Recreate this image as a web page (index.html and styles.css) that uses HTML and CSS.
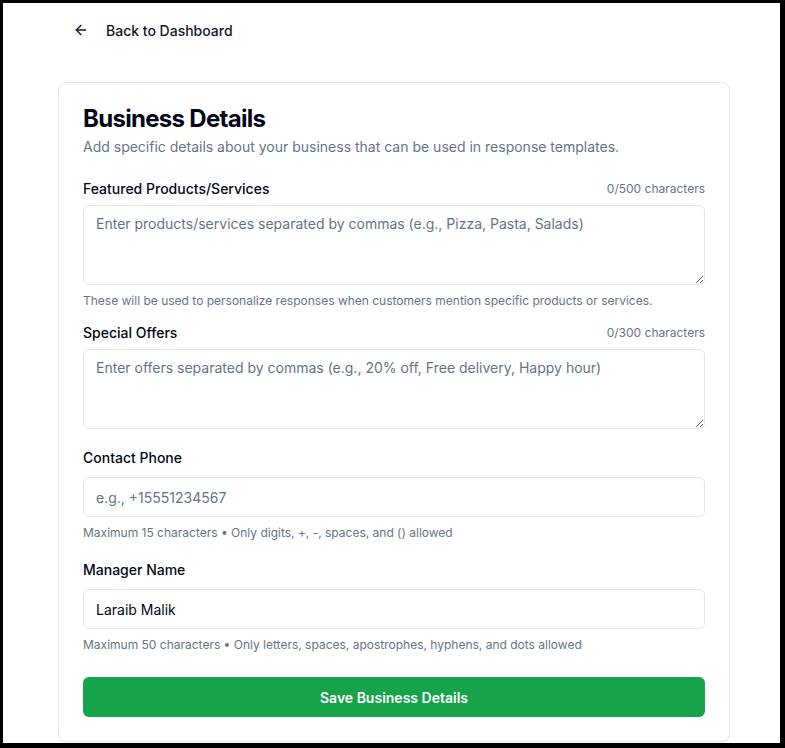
FILE: index.html
```html
<!DOCTYPE html>
<html lang="en">
<head>
<meta charset="utf-8">
<title>Business Details</title>
<link rel="stylesheet" href="styles.css">
</head>
<body>
<div class="frame">
  <div class="page">
    <a class="back" href="#">
      <svg class="back-icon" width="16" height="16" viewBox="0 0 24 24" fill="none" stroke="currentColor" stroke-width="2" stroke-linecap="round" stroke-linejoin="round"><path d="m12 19-7-7 7-7"/><path d="M19 12H5"/></svg>
      <span>Back to Dashboard</span>
    </a>
    <div class="card">
      <h1 class="title">Business Details</h1>
      <p class="subtitle">Add specific details about your business that can be used in response templates.</p>

      <div class="field field-first">
        <div class="field-head">
          <label class="label">Featured Products/Services</label>
          <span class="counter">0/500 characters</span>
        </div>
        <textarea class="textarea" placeholder="Enter products/services separated by commas (e.g., Pizza, Pasta, Salads)"></textarea>
        <p class="help help-area">These will be used to personalize responses when customers mention specific products or services.</p>
      </div>

      <div class="field field-second">
        <div class="field-head">
          <label class="label">Special Offers</label>
          <span class="counter">0/300 characters</span>
        </div>
        <textarea class="textarea" placeholder="Enter offers separated by commas (e.g., 20% off, Free delivery, Happy hour)"></textarea>
      </div>

      <div class="field field-input">
        <label class="label label-input">Contact Phone</label>
        <input class="input" type="text" placeholder="e.g., +15551234567">
        <p class="help">Maximum 15 characters • Only digits, +, -, spaces, and () allowed</p>
      </div>

      <div class="field field-input">
        <label class="label label-input">Manager Name</label>
        <input class="input" type="text" value="Laraib Malik">
        <p class="help">Maximum 50 characters • Only letters, spaces, apostrophes, hyphens, and dots allowed</p>
      </div>

      <button class="save" type="button">Save Business Details</button>
    </div>
  </div>
</div>
</body>
</html>
```

FILE: styles.css
```css
* { box-sizing: border-box; }

html {
  background: #000;
}

body {
  margin: 0;
  font-family: Inter, "Noto Sans", "Liberation Sans", sans-serif;
  color: #0f172a;
}

.frame {
  margin: 3px 5px 5px 3px;
  height: 740px;
  background: #fff;
  overflow: hidden;
}

.page {
  padding-left: 55px;
  padding-top: 9px;
}

.back {
  display: inline-flex;
  align-items: center;
  gap: 17px;
  height: 36px;
  padding-left: 15px;
  color: #0f172a;
  text-decoration: none;
  font-size: 14px;
  font-weight: 500;
}

.back-icon {
  display: block;
  flex: none;
}

.card {
  margin-top: 34px;
  width: 672px;
  border: 1px solid #e5e7eb;
  border-radius: 8px;
  padding: 24px 24px 24px;
  background: #fff;
  box-shadow: 0 1px 2px rgba(0, 0, 0, 0.03);
}

.title {
  margin: 0;
  font-size: 24px;
  line-height: 24px;
  font-weight: 700;
  letter-spacing: -0.7px;
  color: #020817;
}

.subtitle {
  margin: 6px 0 0;
  font-size: 14px;
  line-height: 20px;
  color: #64748b;
}

.field {
  display: flex;
  flex-direction: column;
}

.field-first { margin-top: 22px; }
.field-second { margin-top: 14px; }
.field-input { margin-top: 19px; }

.field-head {
  display: flex;
  justify-content: space-between;
  align-items: center;
  height: 20px;
  margin-bottom: 6px;
}

.label {
  font-size: 14px;
  line-height: 20px;
  font-weight: 500;
  color: #020817;
}

.label-input {
  margin-bottom: 9px;
}

.counter {
  font-size: 12px;
  line-height: 16px;
  color: #64748b;
}

.textarea {
  display: block;
  width: 100%;
  height: 80px;
  padding: 8px 12px;
  border: 1px solid #e2e8f0;
  border-radius: 6px;
  font-family: inherit;
  font-size: 14px;
  line-height: 20px;
  color: #020817;
  resize: vertical;
  outline: none;
}

.input {
  display: block;
  width: 100%;
  height: 40px;
  padding: 0 12px;
  border: 1px solid #e2e8f0;
  border-radius: 6px;
  font-family: inherit;
  font-size: 14px;
  color: #020817;
  outline: none;
}

.textarea::placeholder,
.input::placeholder {
  color: #64748b;
}

.help {
  margin: 8px 0 0;
  font-size: 12px;
  line-height: 16px;
  color: #64748b;
}

.help-area {
  margin-top: 8px;
}

.save {
  display: block;
  width: 100%;
  height: 40px;
  margin-top: 24px;
  border: none;
  border-radius: 6px;
  background: #16a34a;
  color: #fff;
  font-family: inherit;
  font-size: 14px;
  font-weight: 600;
  cursor: pointer;
}
```
